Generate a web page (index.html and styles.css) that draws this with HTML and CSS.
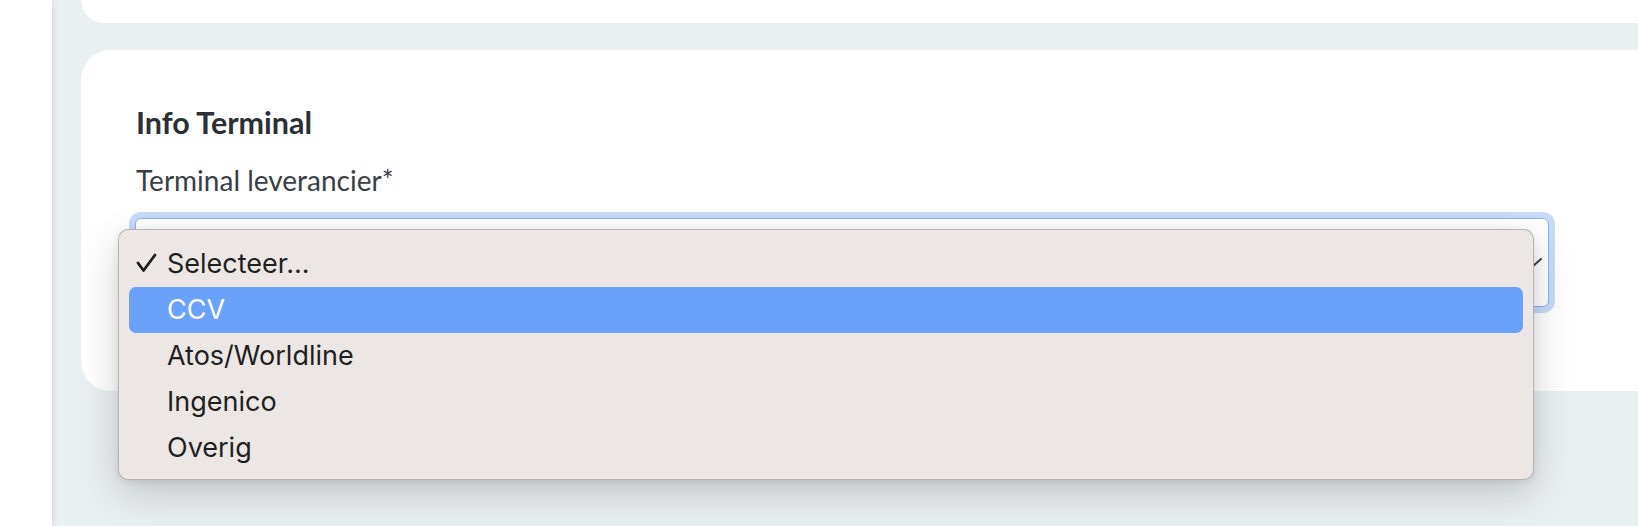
FILE: index.html
```html
<!DOCTYPE html>
<html lang="nl">
<head>
<meta charset="utf-8">
<title>Info Terminal</title>
<link rel="stylesheet" href="styles.css">
</head>
<body>
<div class="layout">
  <aside class="sidebar"></aside>
  <main class="main">
    <section class="card card-top"></section>
    <section class="card card-form">
      <h2 class="section-title">Info Terminal</h2>
      <label class="field-label">Terminal leverancier*</label>
      <div class="select">
        <svg class="chevron" width="22" height="12" viewBox="0 0 22 12"><path d="M2 2 L11 10 L20 2" fill="none" stroke="#3b3f46" stroke-width="2" stroke-linecap="round" stroke-linejoin="round"/></svg>
        <ul class="menu">
          <li class="menu-item checked"><svg class="check" width="21" height="20" viewBox="0 0 21 20"><path d="M2 10 L7.5 17.5 L19 2" fill="none" stroke="#1f1f1f" stroke-width="2.8" stroke-linecap="round" stroke-linejoin="round"/></svg>Selecteer...</li>
          <li class="menu-item active">CCV</li>
          <li class="menu-item">Atos/Worldline</li>
          <li class="menu-item">Ingenico</li>
          <li class="menu-item">Overig</li>
        </ul>
      </div>
    </section>
  </main>
</div>
</body>
</html>
```

FILE: styles.css
```css
html, body {
  margin: 0;
  padding: 0;
}
body {
  width: 1638px;
  height: 526px;
  overflow: hidden;
  background: #eaeff2;
}
.layout {
  display: flex;
  height: 526px;
}
.sidebar {
  width: 52px;
  flex: none;
  background: #ffffff;
  box-shadow: 1px 0 6px rgba(40, 60, 80, 0.12);
  position: relative;
  z-index: 2;
}
.main {
  flex: 1;
  background: #eaeff2;
  padding-left: 29px;
  display: flex;
  flex-direction: column;
  gap: 27px;
}
.card {
  background: #ffffff;
}
.card-top {
  height: 23px;
  border-radius: 0 0 0 30px;
}
.card-form {
  height: 341px;
  box-sizing: border-box;
  border-radius: 30px 0 0 30px;
  padding: 54px 89px 0 55px;
}
.section-title {
  margin: 0;
  font-family: Lato, "Noto Sans", sans-serif;
  font-weight: 700;
  font-size: 30.5px;
  line-height: 36px;
  color: #2b2f36;
}
.field-label {
  display: block;
  margin-top: 23px;
  font-family: Lato, "Noto Sans", sans-serif;
  font-weight: 400;
  font-size: 28px;
  line-height: 34px;
  color: #3a3e45;
}
.select {
  position: relative;
  margin-top: 21px;
  margin-left: -1px;
  height: 89px;
  box-sizing: border-box;
  border: 1px solid #8bb2ee;
  border-radius: 6px;
  background: #ffffff;
  box-shadow: 0 0 0 6px #c8daf8;
}
.chevron {
  position: absolute;
  right: 5px;
  top: 38px;
}
.menu {
  position: absolute;
  left: -18px;
  top: 10px;
  width: 1416px;
  height: 251px;
  box-sizing: border-box;
  margin: 0;
  padding: 11px 10px 8px;
  list-style: none;
  background: #ece7e4;
  border: 1px solid rgba(0, 0, 0, 0.22);
  border-radius: 10px;
  box-shadow: 0 14px 40px rgba(0, 0, 0, 0.18), 0 2px 8px rgba(0, 0, 0, 0.08);
  z-index: 3;
}
.menu-item {
  position: relative;
  height: 46px;
  line-height: 46px;
  padding-left: 38px;
  font-family: Inter, "Liberation Sans", sans-serif;
  font-size: 27px;
  color: #1f1f1f;
  border-radius: 7px;
}
.menu-item.active {
  background: #6aa1fa;
  color: #ffffff;
}
.check {
  position: absolute;
  left: 7px;
  top: 12px;
}
```
